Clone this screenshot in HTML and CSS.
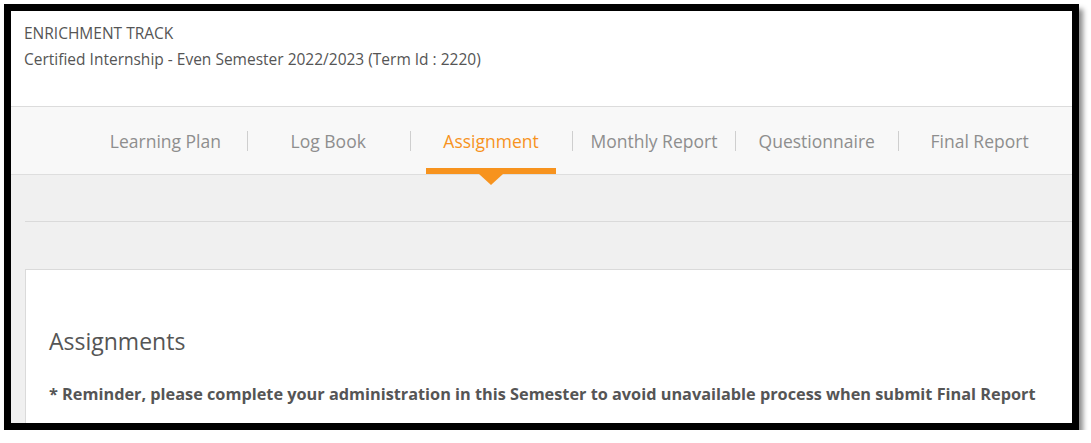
FILE: index.html
```html
<!DOCTYPE html>
<html lang="en">
<head>
<meta charset="utf-8">
<title>Enrichment Track - Assignment</title>
<link rel="stylesheet" href="styles.css">
</head>
<body>
<div class="frame">
  <div class="screen">
    <header class="head">
      <div class="head-title">ENRICHMENT TRACK</div>
      <div class="head-sub">Certified Internship - Even Semester 2022/2023 (Term Id : 2220)</div>
    </header>
    <nav class="tabs">
      <div class="tab"><span class="tab-link">Learning Plan</span></div>
      <div class="tab"><span class="tab-link">Log Book</span></div>
      <div class="tab active"><span class="tab-link">Assignment</span></div>
      <div class="tab"><span class="tab-link">Monthly Report</span></div>
      <div class="tab"><span class="tab-link">Questionnaire</span></div>
      <div class="tab"><span class="tab-link">Final Report</span></div>
    </nav>
    <main class="content">
      <div class="crumb"></div>
      <section class="card">
        <h2 class="card-title">Assignments</h2>
        <p class="reminder">* Reminder, please complete your administration in this Semester to avoid unavailable process when submit Final Report</p>
      </section>
    </main>
  </div>
</div>
</body>
</html>
```
FILE: styles.css
```css
* { box-sizing: border-box; }
html, body { margin: 0; padding: 0; background: #fff; }
body { font-family: "Open Sans", "Liberation Sans", sans-serif; color: #555; }

.frame {
  margin: 4px 0 0 4px;
  width: 1075px;
  height: 426px;
  border: 7px solid #000;
  box-shadow: 4px 5px 5px rgba(0,0,0,0.45);
  background: #fff;
}
.screen {
  width: 100%;
  height: 100%;
  overflow: hidden;
  background: #f0f0f0;
}

.head {
  height: 96px;
  background: #fff;
  border-bottom: 1px solid #dcdcdc;
  padding: 9px 13px 0;
  font-size: 15.5px;
  line-height: 26px;
  color: #555;
}

.tabs {
  display: grid;
  grid-template-columns: repeat(6, 1fr);
  height: 68px;
  padding: 0 11px 0 73px;
  background: #f8f8f8;
  border-bottom: 1px solid #dedede;
}
.tab {
  position: relative;
  display: flex;
  justify-content: center;
  align-items: stretch;
}
.tab + .tab::before {
  content: "";
  position: absolute;
  left: 0;
  top: 24px;
  height: 20px;
  border-left: 1px solid #cfcfcf;
}
.tab-link {
  display: flex;
  align-items: center;
  padding: 6px 17px 6px;
  font-size: 17.5px;
  color: #8e8e8e;
  position: relative;
}
.tab.active .tab-link {
  color: #f7931e;
  border-bottom: 6px solid #f7931e;
  padding-bottom: 0;
}
.tab.active .tab-link::after {
  content: "";
  position: absolute;
  left: 50%;
  bottom: -17px;
  margin-left: -12px;
  border-left: 12px solid transparent;
  border-right: 12px solid transparent;
  border-top: 11px solid #f7931e;
}

.content {
  padding: 0 0 0 14px;
  margin-right: -30px;
}
.crumb {
  height: 47px;
  border-bottom: 1px solid #dadada;
}
.card {
  margin-top: 47px;
  background: #fff;
  border: 1px solid #dadada;
  padding: 54px 23px 20px;
  min-height: 200px;
}
.card-title {
  margin: 0;
  font-size: 23px;
  font-weight: 400;
  line-height: 34px;
  color: #555;
}
.reminder {
  margin: 25px 0 0;
  font-size: 16.3px;
  font-weight: 700;
  line-height: 22px;
  color: #555;
}
```
